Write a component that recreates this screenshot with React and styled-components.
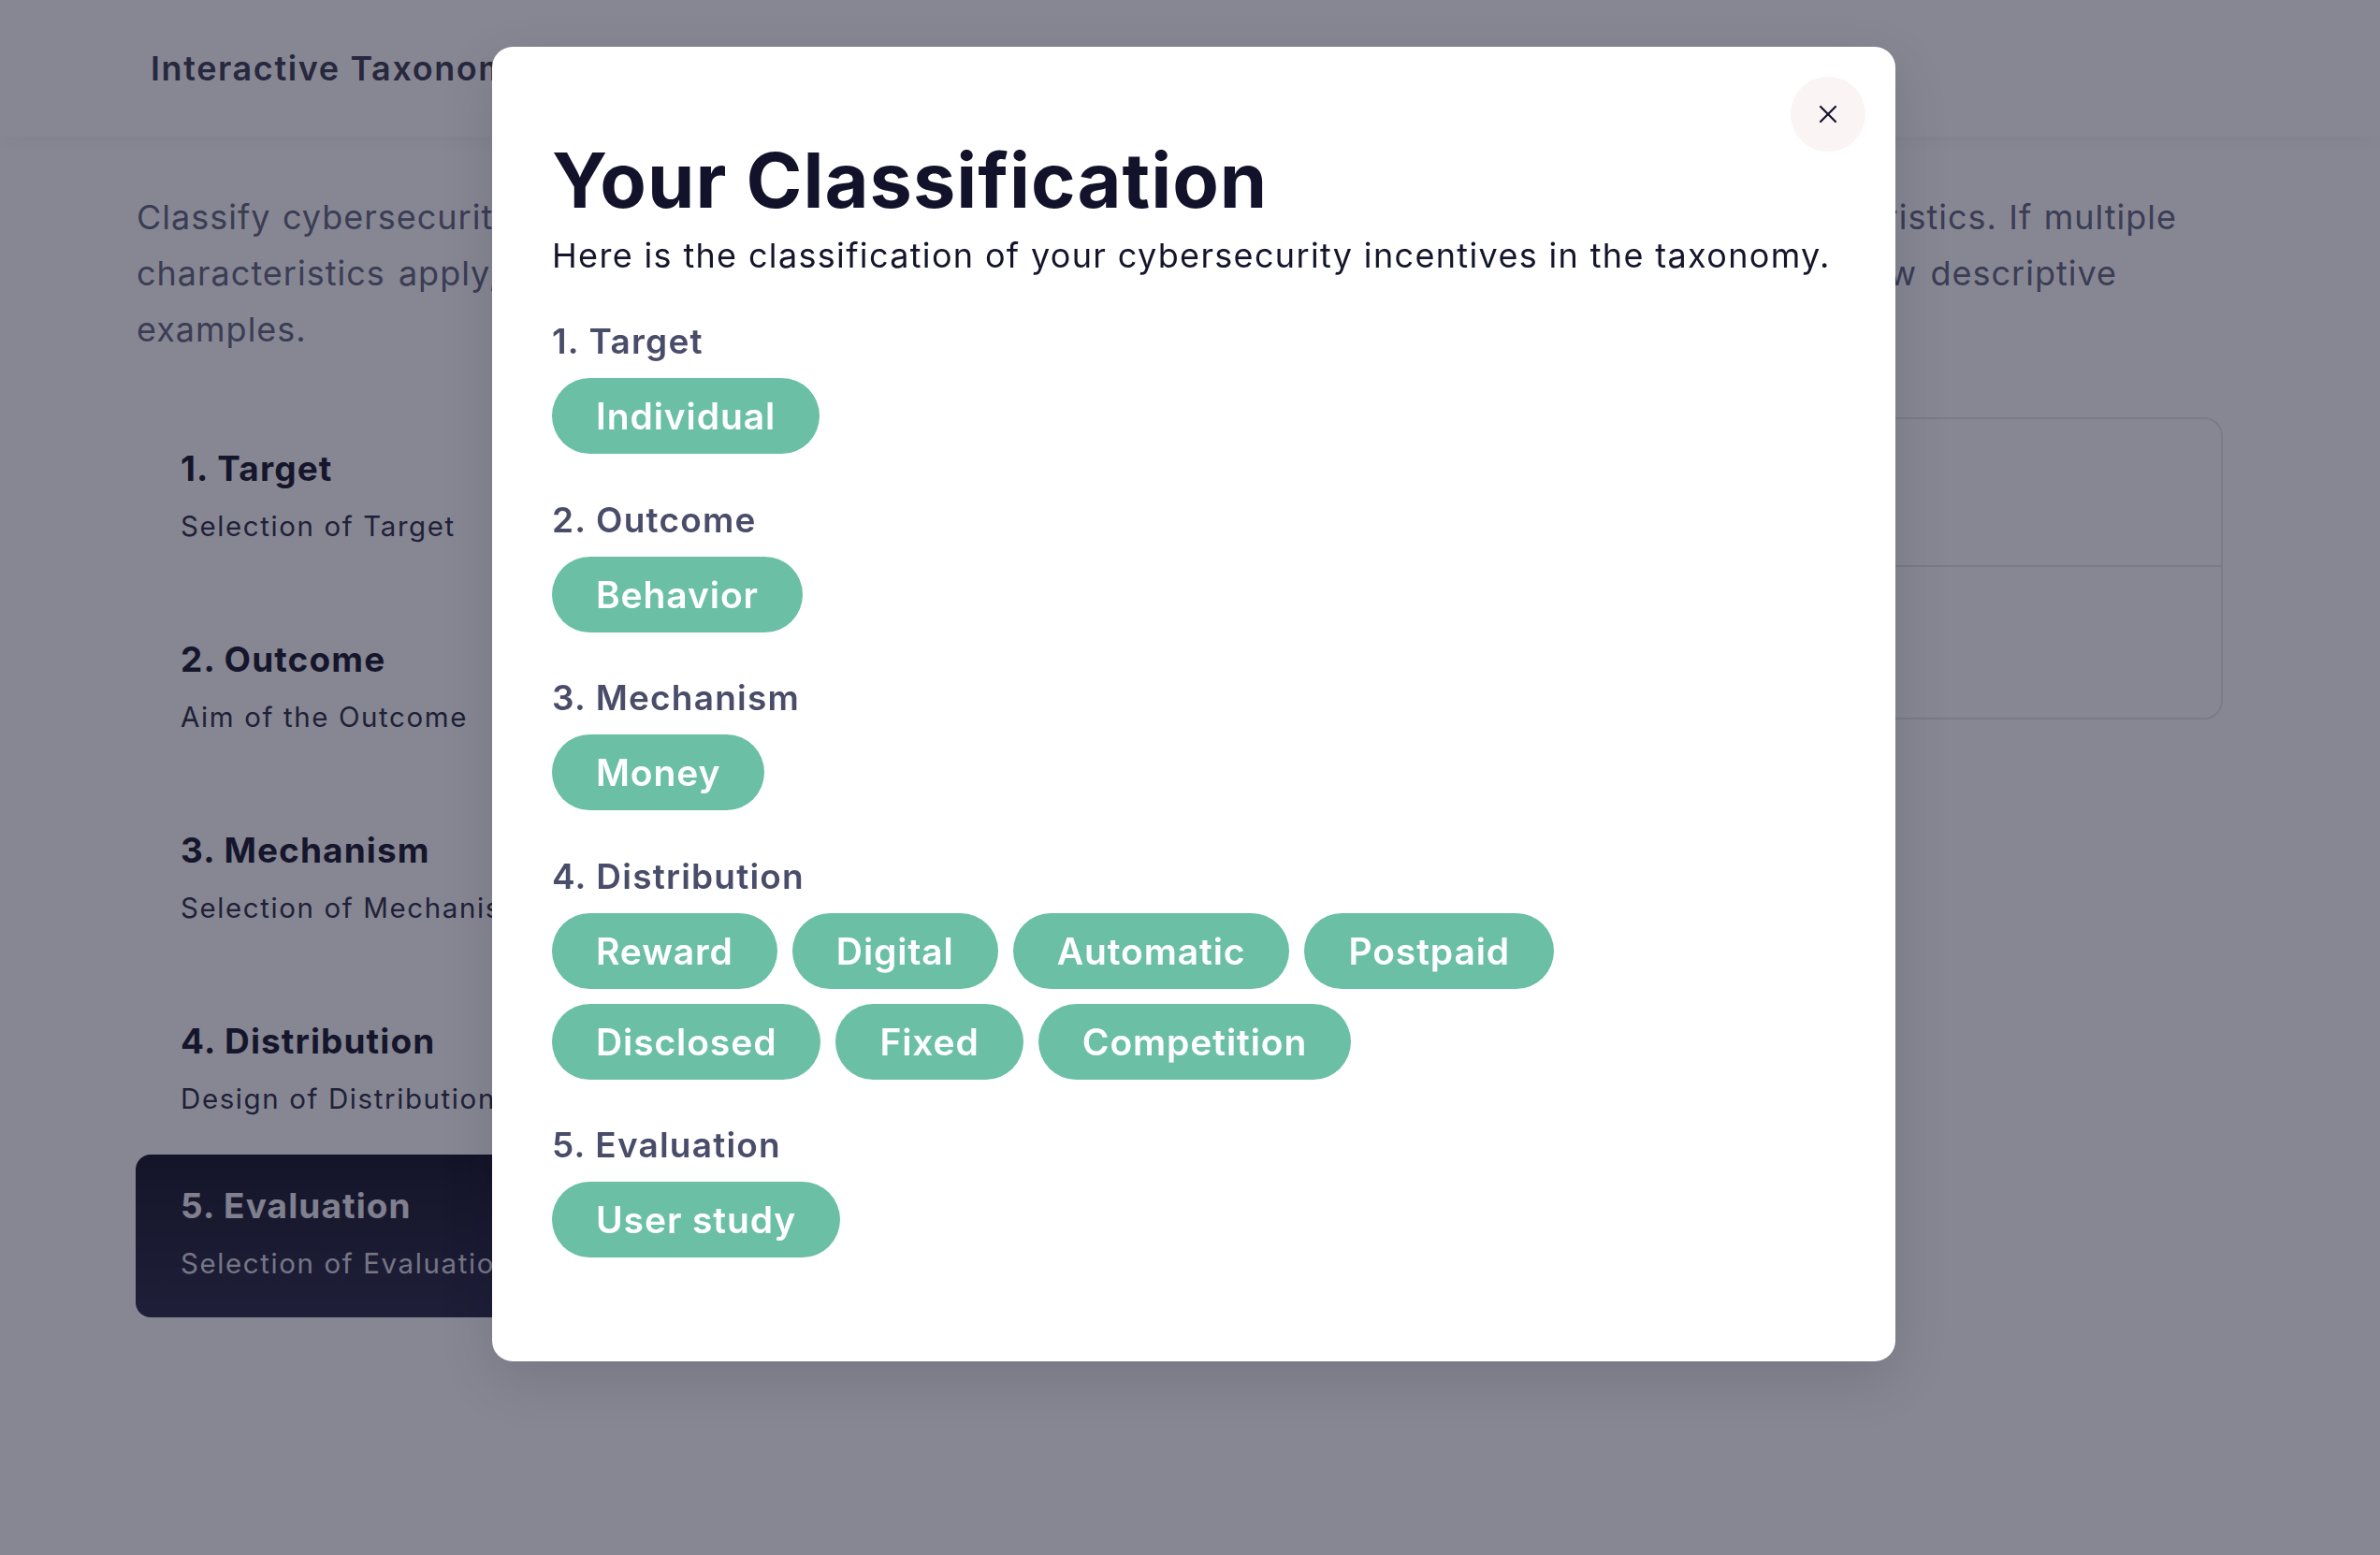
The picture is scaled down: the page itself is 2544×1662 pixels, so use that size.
import React from "react";
import styled, { createGlobalStyle } from "styled-components";
import { X } from "lucide-react";

const GlobalStyle = createGlobalStyle`
  * { box-sizing: border-box; }
  html, body { margin: 0; padding: 0; background: #ffffff; }
  body { font-family: Inter, "Open Sans", sans-serif; -webkit-font-smoothing: antialiased; }
`;

const Page = styled.div`
  min-height: 1662px;
  background: #ffffff;
`;

const Header = styled.header`
  height: 146px;
  display: flex;
  align-items: center;
  padding-left: 161px;
  background: #ffffff;
  box-shadow: 0 4px 22px rgba(20, 20, 40, 0.05);
`;

const Brand = styled.h1`
  margin: 0;
  font-size: 36px;
  line-height: 44px;
  font-weight: 600;
  letter-spacing: 1.6px;
  color: #3f4154;
`;

const Main = styled.main`
  padding: 56px 168px 0 146px;
`;

const Intro = styled.p`
  margin: 0;
  font-size: 36px;
  line-height: 60px;
  font-weight: 400;
  letter-spacing: 1px;
  color: #666a83;
`;

const IntroLine = styled.span`
  display: block;
  width: ${(p) => (p.$w ? `${p.$w}px` : "auto")};
  text-align: ${(p) => (p.$w ? "justify" : "left")};
  text-align-last: ${(p) => (p.$w ? "justify" : "auto")};
`;

const Layout = styled.div`
  display: grid;
  grid-template-columns: 600px 1fr;
  column-gap: 40px;
  align-items: start;
  margin-top: 64px;
  margin-left: -1px;
`;

const Steps = styled.nav`
  display: flex;
  flex-direction: column;
  gap: 30px;
`;

const Step = styled.div`
  height: 174px;
  padding: 33px 48px 0;
  border-radius: 16px;
  margin-top: ${(p) => (p.$active ? "-28px" : "0")};
  background: ${(p) =>
    p.$active ? "linear-gradient(180deg, #19192b 0%, #2e2e4a 100%)" : "transparent"};
`;

const StepTitle = styled.div`
  font-size: 37px;
  line-height: 44px;
  font-weight: 700;
  letter-spacing: 1.1px;
  white-space: nowrap;
  color: ${(p) => (p.$active ? "#f0f0f4" : "#1b1d31")};
`;

const StepSub = styled.div`
  margin-top: 21px;
  font-size: 29.5px;
  line-height: 36px;
  font-weight: 400;
  letter-spacing: 1.6px;
  white-space: nowrap;
  color: ${(p) => (p.$active ? "#dcdce2" : "#2f3349")};
`;

const Card = styled.section`
  border: 2px solid #e4e4eb;
  border-radius: 20px;
  overflow: hidden;
`;

const CardRow = styled.div`
  height: ${(p) => p.$h}px;
  padding: 40px 48px;
  border-top: ${(p) => (p.$first ? "none" : "2px solid #e4e4eb")};
`;

const OptionName = styled.div`
  font-size: 32px;
  line-height: 40px;
  font-weight: 600;
  color: #1b1d31;
`;

const OptionDesc = styled.div`
  margin-top: 12px;
  font-size: 26px;
  line-height: 34px;
  color: #4a4d6a;
`;

const Overlay = styled.div`
  position: fixed;
  inset: 0;
  background: rgba(15, 15, 39, 0.5);
  display: flex;
  justify-content: center;
  align-items: flex-start;
  padding: 50px 0 0 8px;
`;

const Modal = styled.div`
  position: relative;
  width: 1500px;
  background: #ffffff;
  border-radius: 22px;
  padding: 95px 64px 111px;
  box-shadow: 0 20px 60px rgba(10, 10, 30, 0.12);
`;

const CloseButton = styled.button`
  position: absolute;
  top: 32px;
  right: 32px;
  width: 80px;
  height: 80px;
  border: none;
  border-radius: 50%;
  background: #faf4f4;
  display: flex;
  align-items: center;
  justify-content: center;
  color: #12132b;
  padding: 0;
  cursor: pointer;
`;

const Title = styled.h2`
  margin: 0;
  font-size: 81px;
  line-height: 97px;
  font-weight: 700;
  letter-spacing: 1px;
  color: #12132b;
`;

const Subtitle = styled.p`
  margin: 9px 0 0;
  font-size: 36px;
  line-height: 44px;
  font-weight: 400;
  letter-spacing: 1.34px;
  color: #14152b;
`;

const Sections = styled.div`
  margin-top: 48px;
  display: flex;
  flex-direction: column;
  gap: 48.5px;
`;

const Section = styled.div`
  display: flex;
  flex-direction: column;
  gap: 17px;
`;

const SectionLabel = styled.h3`
  margin: 0;
  font-size: 37px;
  line-height: 44px;
  font-weight: 600;
  letter-spacing: 1.2px;
  color: #4a4d6a;
`;

const ChipRow = styled.div`
  display: flex;
  flex-wrap: wrap;
  gap: 16px;
`;

const Chip = styled.span`
  height: 81px;
  display: inline-flex;
  align-items: center;
  padding: 0 47px;
  border-radius: 999px;
  background: #6abfa5;
  color: #ffffff;
  font-size: 39px;
  font-weight: 600;
  letter-spacing: 0.9px;
  white-space: nowrap;
`;

const steps = [
  { title: "1. Target", sub: "Selection of Target" },
  { title: "2. Outcome", sub: "Aim of the Outcome" },
  { title: "3. Mechanism", sub: "Selection of Mechanism" },
  { title: "4. Distribution", sub: "Design of Distribution" },
  { title: "5. Evaluation", sub: "Selection of Evaluation", active: true },
];

const classification = [
  { label: "1. Target", values: ["Individual"] },
  { label: "2. Outcome", values: ["Behavior"] },
  { label: "3. Mechanism", values: ["Money"] },
  {
    label: "4. Distribution",
    values: ["Reward", "Digital", "Automatic", "Postpaid", "Disclosed", "Fixed", "Competition"],
  },
  { label: "5. Evaluation", values: ["User study"] },
];

export default function App() {
  return (
    <>
      <GlobalStyle />
      <Page>
        <Header>
          <Brand>Interactive Taxonomy</Brand>
        </Header>
        <Main>
          <Intro>
            <IntroLine $w={2181}>
              Classify cybersecurity incentives in the interactive taxonomy by selecting their corresponding characteristics. If multiple
            </IntroLine>
            <IntroLine $w={2117}>
              characteristics apply, select all of them. Each one of the dimensions is explained with the help of a few descriptive
            </IntroLine>
            <IntroLine>examples.</IntroLine>
          </Intro>
          <Layout>
            <Steps>
              {steps.map((s) => (
                <Step key={s.title} $active={s.active}>
                  <StepTitle $active={s.active}>{s.title}</StepTitle>
                  <StepSub $active={s.active}>{s.sub}</StepSub>
                </Step>
              ))}
            </Steps>
            <Card>
              <CardRow $first $h={156}>
                <OptionName>User study</OptionName>
                <OptionDesc>Evaluated with participants</OptionDesc>
              </CardRow>
              <CardRow $h={163}>
                <OptionName>Field study</OptionName>
                <OptionDesc>Evaluated in practice</OptionDesc>
              </CardRow>
            </Card>
          </Layout>
        </Main>
      </Page>
      <Overlay>
        <Modal>
          <CloseButton aria-label="Close">
            <X size={32} strokeWidth={1.6} />
          </CloseButton>
          <Title>Your Classification</Title>
          <Subtitle>Here is the classification of your cybersecurity incentives in the taxonomy.</Subtitle>
          <Sections>
            {classification.map((c) => (
              <Section key={c.label}>
                <SectionLabel>{c.label}</SectionLabel>
                <ChipRow>
                  {c.values.map((v) => (
                    <Chip key={v}>{v}</Chip>
                  ))}
                </ChipRow>
              </Section>
            ))}
          </Sections>
        </Modal>
      </Overlay>
    </>
  );
}
